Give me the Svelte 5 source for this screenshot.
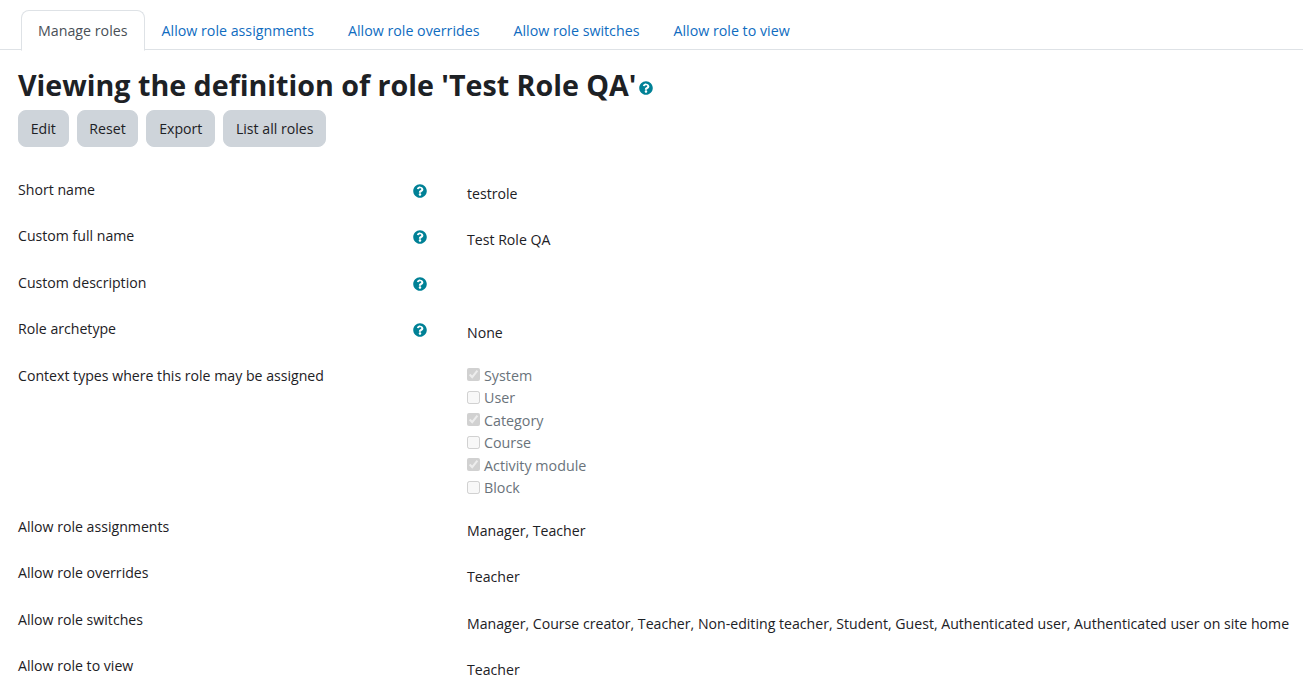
<script>
	const tabs = ['Manage roles', 'Allow role assignments', 'Allow role overrides', 'Allow role switches', 'Allow role to view'];
	const buttons = ['Edit', 'Reset', 'Export', 'List all roles'];

	const topRows = [
		{ label: 'Short name', value: 'testrole' },
		{ label: 'Custom full name', value: 'Test Role QA' },
		{ label: 'Custom description', value: '' },
		{ label: 'Role archetype', value: 'None' }
	];

	const contexts = [
		{ name: 'System', checked: true },
		{ name: 'User', checked: false },
		{ name: 'Category', checked: true },
		{ name: 'Course', checked: false },
		{ name: 'Activity module', checked: true },
		{ name: 'Block', checked: false }
	];

	const bottomRows = [
		{ label: 'Allow role assignments', value: 'Manager, Teacher' },
		{ label: 'Allow role overrides', value: 'Teacher' },
		{ label: 'Allow role switches', value: 'Manager, Course creator, Teacher, Non-editing teacher, Student, Guest, Authenticated user, Authenticated user on site home' },
		{ label: 'Allow role to view', value: 'Teacher' }
	];
</script>

{#snippet help(size)}
	<svg class="help" width={size} height={size} viewBox="0 0 512 512" aria-hidden="true">
		<path d="M504 256c0 137-111 248-248 248S8 393 8 256 119 8 256 8s248 111 248 248zM262.700 90c-54.500 0-89.300 23-116.500 63.800-3.500 5.300-2.400 12.400 2.700 16.300l34.700 26.300c5.200 3.900 12.600 3 16.700-2.100 17.900-22.700 30.100-35.800 57.300-35.800 20.400 0 45.700 13.100 45.700 33 0 15-12.400 22.700-32.700 34-23.600 13.200-54.900 29.700-54.900 71V312c0 6.600 5.400 12 12 12h56c6.600 0 12-5.400 12-12v-1.300c0-28.700 83.800-29.800 83.800-107.400 0-58.400-60.600-103.300-117.800-103.300zM256 338c-25.500 0-46.300 20.800-46.300 46.300 0 25.500 20.800 46.300 46.300 46.300s46.300-20.800 46.300-46.300c0-25.500-20.800-46.300-46.300-46.300z" fill="currentColor" />
	</svg>
{/snippet}

<div class="page">
	<ul class="tabs">
		{#each tabs as tab, i}
			<li class="tab" class:active={i === 0}>{tab}</li>
		{/each}
	</ul>

	<h2 class="title">Viewing the definition of role 'Test Role QA'{@render help(14)}</h2>

	<div class="buttons">
		{#each buttons as b}
			<button type="button">{b}</button>
		{/each}
	</div>

	<div class="rows">
		{#each topRows as row}
			<div class="row">
				<div class="label">{row.label}</div>
				<div class="icon">{@render help(14)}</div>
				<div class="value">{row.value}</div>
			</div>
		{/each}

		<div class="row contexts">
			<div class="label">Context types where this role may be assigned</div>
			<div class="icon"></div>
			<div class="value">
				{#each contexts as c}
					<label class="check">
						<input type="checkbox" checked={c.checked} disabled />
						{c.name}
					</label>
				{/each}
			</div>
		</div>

		{#each bottomRows as row}
			<div class="row">
				<div class="label">{row.label}</div>
				<div class="icon"></div>
				<div class="value">{row.value}</div>
			</div>
		{/each}
	</div>
</div>

<style>
	:global(body) {
		margin: 0;
		background: #fff;
		overflow: hidden;
	}

	.page {
		font-family: "Open Sans", "Noto Sans", sans-serif;
		font-size: 14.13px;
		line-height: 22.5px;
		color: #1d2125;
		height: 699px;
		overflow: hidden;
	}

	.tabs {
		display: flex;
		list-style: none;
		margin: 0;
		padding: 10px 0 0 21px;
		border-bottom: 1px solid #dee2e6;
		height: 39px;
	}

	.tab {
		padding: 9px 16px 0;
		height: 30px;
		font-size: 14.24px;
		color: #0f6cbf;
		border: 1px solid transparent;
		white-space: nowrap;
	}

	.tab.active {
		color: #495057;
		background: #fff;
		border-color: #dee2e6 #dee2e6 #fff;
		border-radius: 8px 8px 0 0;
	}

	.title {
		margin: 15px 0 0 18px;
		font-size: 28.65px;
		line-height: 40px;
		font-weight: 700;
		display: flex;
		align-items: center;
		white-space: nowrap;
	}

	.title .help {
		margin: 5px 0 0 3px;
	}

	.help {
		color: #008196;
		display: block;
	}

	.buttons {
		display: flex;
		gap: 8px;
		margin: 5px 0 0 18px;
	}

	button {
		font: inherit;
		color: #1d2125;
		background: #ced4da;
		border: 1px solid #ced4da;
		border-radius: 8px;
		height: 37px;
		padding: 2px 11.75px 0;
	}

	.rows {
		margin: 32px 0 0 18px;
	}

	.row {
		display: grid;
		grid-template-columns: 395px 54px 1fr;
		min-height: 30.4px;
		margin-bottom: 16px;
	}

	.contexts {
		margin-bottom: 16.5px;
	}

	.icon {
		padding-top: 5px;
	}

	.value {
		padding-top: 4px;
		white-space: nowrap;
	}

	.contexts .value {
		padding-top: 0;
		font-size: 14.3px;
		color: #6a737b;
	}

	.check {
		display: flex;
		align-items: center;
		height: 22.5px;
		gap: 4px;
	}

	.check input {
		width: 13px;
		height: 13px;
		margin: -2px 0 0;
	}
</style>
